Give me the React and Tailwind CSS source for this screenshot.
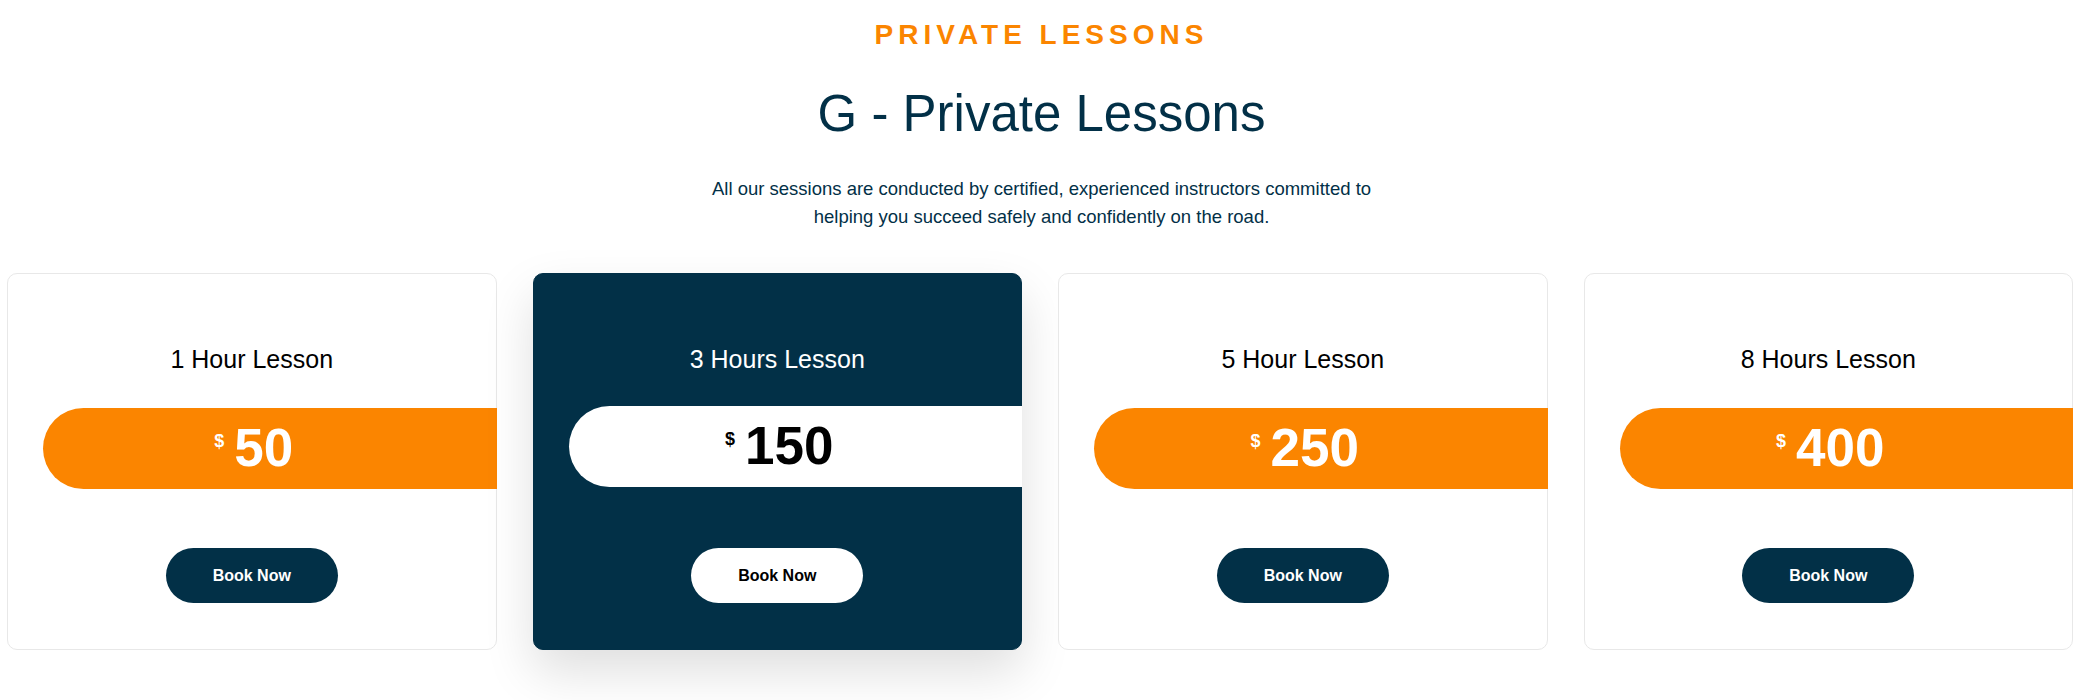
import React from 'react';

const lessons = [
  { title: '1 Hour Lesson', price: '50' },
  { title: '3 Hours Lesson', price: '150', featured: true },
  { title: '5 Hour Lesson', price: '250' },
  { title: '8 Hours Lesson', price: '400' },
];

const LessonCard = ({ title, price, featured }) => {
  return (
    <div
      className={`flex flex-col items-center rounded-[10px] border pt-[73px] pb-[46px] ${
        featured
          ? 'bg-[#023047] border-[#023047] shadow-[0_22px_50px_rgba(0,0,0,0.13)]'
          : 'bg-white border-[#e8e8e8]'
      }`}
    >
      <h3 className={`text-[25px] leading-[25px] font-normal ${featured ? 'text-white' : 'text-black'}`}>
        {title}
      </h3>

      {/* price strip runs out to the right edge of the card */}
      <div
        className={`h-[81px] self-stretch ml-[35px] -mr-px pr-[32px] rounded-l-full flex items-center justify-center ${
          featured ? 'mt-[34px] mb-[2px] bg-white text-black' : 'mt-[36px] bg-[#fb8500] text-white'
        }`}
      >
        <div className="flex items-start pb-[2px]">
          <span className="text-[18px] leading-none font-bold mt-[11px] mr-[10px]">$</span>
          <span className="text-[53px] leading-none font-bold">{price}</span>
        </div>
      </div>

      <button
        className={`mt-[59px] w-[172px] h-[55px] rounded-full text-[16px] font-bold ${
          featured ? 'bg-white text-black' : 'bg-[#023047] text-white'
        }`}
      >
        Book Now
      </button>
    </div>
  );
};

export default function App() {
  return (
    <div className="min-h-screen bg-white font-['Liberation_Sans',Arial,sans-serif]">
      <section className="pt-[21px] pb-[50px]">
        {/* Header */}
        <div className="text-center">
          <h4 className="text-[28px] leading-[28px] font-bold tracking-[5px] text-[#fb8500] uppercase">
            Private Lessons
          </h4>
          <h2 className="mt-[39px] text-[51px] leading-[51px] font-normal text-[#023047]">
            G - Private Lessons
          </h2>
          <p className="mt-[36px] mx-auto max-w-[690px] text-[18.5px] leading-[28px] text-[#023047]">
            All our sessions are conducted by certified, experienced instructors committed to helping you
            succeed safely and confidently on the road.
          </p>
        </div>

        {/* Cards */}
        <div className="mt-[42px] pl-[7px] pr-[10px] grid grid-cols-4 gap-[36px]">
          {lessons.map((lesson) => (
            <LessonCard key={lesson.title} {...lesson} />
          ))}
        </div>
      </section>
    </div>
  );
}
